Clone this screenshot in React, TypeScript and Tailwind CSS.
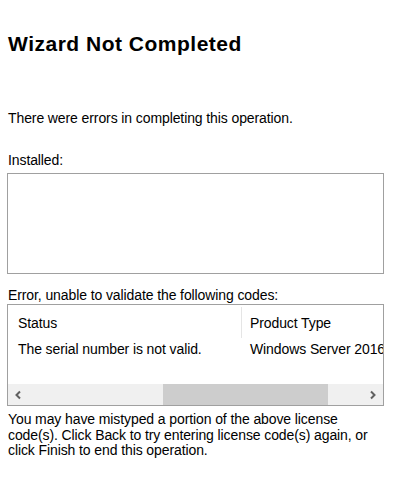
import React from 'react';

const ChevronLeft = () => (
  <svg width="9" height="10" viewBox="0 0 9 10" className="block">
    <path d="M6 1.5 L2.5 5 L6 8.5" fill="none" stroke="#606060" strokeWidth="2" />
  </svg>
);

const ChevronRight = () => (
  <svg width="9" height="10" viewBox="0 0 9 10" className="block">
    <path d="M3 1.5 L6.5 5 L3 8.5" fill="none" stroke="#606060" strokeWidth="2" />
  </svg>
);

const App = () => {
  return (
    <div
      className="w-[400px] h-[488px] bg-white text-black overflow-hidden flex flex-col pl-[7px] pr-[16px]"
      style={{ fontFamily: '"Liberation Sans", Arial, sans-serif' }}
    >
      {/* Title */}
      <h1 className="mt-[32px] pl-[1px] text-[21px] leading-[24px] font-bold tracking-[0.5px]">
        Wizard Not Completed
      </h1>

      <p className="mt-[54px] pl-[1px] text-[14px] leading-[16px] tracking-[-0.1px]">
        There were errors in completing this operation.
      </p>

      <p className="mt-[26px] pl-[1px] text-[14px] leading-[16px] tracking-[-0.1px]">Installed:</p>

      {/* Installed list */}
      <div className="mt-[5px] h-[101px] border border-[#a0a0a0] bg-white"></div>

      <p className="mt-[13px] pl-[1px] text-[14px] leading-[16px] tracking-[-0.1px]">
        Error, unable to validate the following codes:
      </p>

      {/* Codes list view */}
      <div className="mt-[1px] h-[102px] border border-[#a0a0a0] bg-white flex flex-col overflow-hidden text-[14px] leading-[16px] tracking-[-0.1px]">
        <div className="h-[33px] flex shrink-0">
          <div className="w-[233px] pl-[10px] pt-[10px] shrink-0">Status</div>
          <div className="w-px mt-[2px] bg-[#e5e5e5] shrink-0"></div>
          <div className="pl-[8px] pt-[10px] whitespace-nowrap">Product Type</div>
        </div>
        <div className="flex pt-[3px] shrink-0">
          <div className="w-[233px] pl-[10px] shrink-0 whitespace-nowrap">The serial number is not valid.</div>
          <div className="w-px shrink-0"></div>
          <div className="pl-[8px] whitespace-nowrap">Windows Server 2016</div>
        </div>
        <div className="flex-1"></div>
        {/* Horizontal scrollbar */}
        <div className="h-[21px] bg-[#f0f0f0] flex shrink-0">
          <div className="w-[21px] flex items-center justify-center shrink-0">
            <ChevronLeft />
          </div>
          <div className="w-[134px] shrink-0"></div>
          <div className="w-[165px] bg-[#cdcdcd] shrink-0"></div>
          <div className="flex-1"></div>
          <div className="w-[21px] flex items-center justify-center shrink-0">
            <ChevronRight />
          </div>
        </div>
      </div>

      <p className="mt-[6px] pl-[1px] text-[14px] leading-[15.6px] tracking-[-0.1px]">
        You may have mistyped a portion of the above license
        <br />
        code(s). Click Back to try entering license code(s) again, or
        <br />
        click Finish to end this operation.
      </p>
    </div>
  );
};

export default App;
